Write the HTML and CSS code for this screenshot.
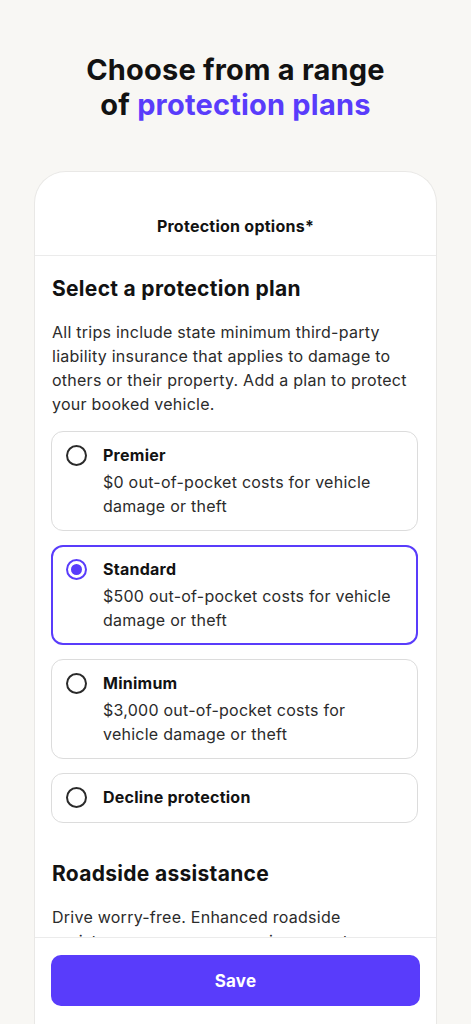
FILE: index.html
```html
<!DOCTYPE html>
<html lang="en">
<head>
<meta charset="utf-8">
<link rel="stylesheet" href="styles.css">
</head>
<body>
<header class="hero">
  <h1 class="hero-title">Choose from a range<br>of <span class="accent">protection plans</span></h1>
</header>
<main class="card">
  <div class="card-header">Protection options*</div>
  <div class="card-body">
    <h2 class="section-title">Select a protection plan</h2>
    <p class="section-text">All trips include state minimum third-party liability insurance that applies to damage to others or their property. Add a plan to protect your booked vehicle.</p>
    <div class="options">
      <div class="option">
        <span class="radio"></span>
        <div class="option-text">
          <div class="option-title">Premier</div>
          <div class="option-desc">$0 out-of-pocket costs for vehicle damage or theft</div>
        </div>
      </div>
      <div class="option selected">
        <span class="radio"></span>
        <div class="option-text">
          <div class="option-title">Standard</div>
          <div class="option-desc">$500 out-of-pocket costs for vehicle damage or theft</div>
        </div>
      </div>
      <div class="option">
        <span class="radio"></span>
        <div class="option-text">
          <div class="option-title">Minimum</div>
          <div class="option-desc">$3,000 out-of-pocket costs for vehicle damage or theft</div>
        </div>
      </div>
      <div class="option single">
        <span class="radio"></span>
        <div class="option-text">
          <div class="option-title">Decline protection</div>
        </div>
      </div>
    </div>
    <h2 class="section-title roadside">Roadside assistance</h2>
    <p class="section-text">Drive worry-free. Enhanced roadside assistance covers common issues not included in standard coverage.</p>
  </div>
  <footer class="card-footer">
    <button class="save-btn">Save</button>
  </footer>
</main>
</body>
</html>
```
FILE: styles.css
```css
* { box-sizing: border-box; }
html, body { margin: 0; padding: 0; }
body {
  background: #f8f7f4;
  font-family: Inter, "Noto Sans", sans-serif;
  color: #121212;
  height: 1024px;
  overflow: hidden;
  letter-spacing: 0.25px;
}
.hero { padding-top: 52px; }
.hero-title {
  margin: 0;
  text-align: center;
  font-size: 29px;
  line-height: 35px;
  font-weight: 700;
  letter-spacing: 0.2px;
  color: #121212;
}
.accent { color: #593cfb; }
.card {
  margin: 49px auto 0;
  width: 403px;
  height: 853px;
  background: #fff;
  border: 1px solid #e9e8e6;
  border-bottom: none;
  border-radius: 32px 32px 0 0;
  display: flex;
  flex-direction: column;
  overflow: hidden;
}
.card-header {
  padding: 43px 0 18px;
  text-align: center;
  font-size: 16px;
  line-height: 22px;
  font-weight: 700;
  border-bottom: 1px solid #ebebeb;
}
.card-body {
  flex: 1;
  overflow: hidden;
  padding: 0 18px 0 16px;
}
.section-title {
  margin: 19px 0 0 1px;
  font-size: 21px;
  line-height: 28px;
  font-weight: 700;
  letter-spacing: 0.3px;
}
.section-text {
  margin: 17px 0 0 1px;
  font-size: 16px;
  line-height: 24px;
  color: #2b2b2b;
}
.options {
  margin-top: 15px;
  display: flex;
  flex-direction: column;
  gap: 14px;
}
.option {
  display: flex;
  gap: 16px;
  border: 1px solid #dcdcdc;
  border-radius: 12px;
  padding: 12px 16px 12px 14px;
}
.option.selected {
  border: 2px solid #593cfb;
  padding: 11px 15px 11px 13px;
}
.option.single { padding-bottom: 14px; }
.radio {
  flex: none;
  width: 21px;
  height: 21px;
  margin-top: 1px;
  border: 2px solid #2a2a2a;
  border-radius: 50%;
  position: relative;
}
.selected .radio { border-color: #593cfb; }
.selected .radio::after {
  content: "";
  position: absolute;
  left: 3px;
  top: 3px;
  width: 11px;
  height: 11px;
  border-radius: 50%;
  background: #593cfb;
}
.option-title {
  font-size: 16px;
  line-height: 22px;
  font-weight: 700;
}
.option-desc {
  margin-top: 4px;
  font-size: 16px;
  line-height: 24px;
  color: #2b2b2b;
}
.roadside { margin-top: 37px; }
.card-footer {
  flex: none;
  border-top: 1px solid #ebebeb;
  padding: 17px 16px 18px;
  background: #fff;
}
.save-btn {
  display: block;
  width: 100%;
  height: 51px;
  border: none;
  border-radius: 10px;
  background: #593cfb;
  color: #fff;
  font-family: inherit;
  font-size: 17px;
  font-weight: 700;
  letter-spacing: 0.25px;
}
```
